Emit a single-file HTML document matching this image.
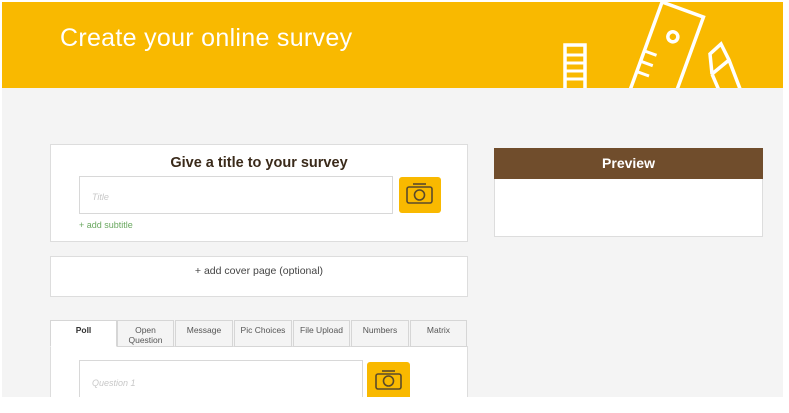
<!DOCTYPE html>
<html><head><meta charset="utf-8"><style>
*{margin:0;padding:0;box-sizing:border-box}
body{width:789px;height:413px;background:#fff;font-family:"Liberation Sans",sans-serif;position:relative;overflow:hidden}
.abs{position:absolute}
.gray{left:2px;top:2px;width:781px;height:395px;background:#f4f4f4}
.hdr{left:2px;top:2px;width:781px;height:86px;background:#f9b900;overflow:hidden}
.card{background:#fff;border:1px solid #ddd}
.inp{background:#fff;border:1px solid #d8d8d8;font-style:italic;color:#c8c8c8;font-size:9px}
.cam{background:#f9b900;border-radius:3px}
.tab{top:320px;height:27px;background:#f4f4f4;border:1px solid #d6d6d6;font-size:8.5px;color:#555;text-align:center;line-height:10px;padding-top:4px}
</style></head><body>
<div class="abs gray"></div>
<div class="abs hdr">
<div class="abs" style="left:58px;top:22px;color:#fff;font-size:25px;letter-spacing:0.3px">Create your online survey</div>
<svg class="abs" style="left:0;top:0" width="781" height="86" fill="none" stroke="#fff" stroke-width="3.5">
<rect x="563" y="43" width="20" height="48"/>
<path d="M563 53h20M563 61h20M563 69h20M563 77h20" stroke-width="3"/>
<g transform="rotate(20 660 50)"><rect x="643" y="3" width="44" height="105"/><circle cx="665" cy="32" r="5"/><path d="M643 55h13M643 66h13M643 77h13" stroke-width="3"/></g>
<path d="M710 72 L708 52 L719 42 L727 58 L740 92 M710 72 L727 58 M710 72 L722 100" stroke-width="3.5"/>
</svg>
</div>
<div class="abs card" style="left:50px;top:144px;width:418px;height:98px"></div>
<div class="abs" style="left:50px;top:155px;width:418px;text-align:center;font-size:14.5px;font-weight:bold;color:#3a2a1a">Give a title to your survey</div>
<div class="abs inp" style="left:79px;top:176px;width:314px;height:38px;padding:15px 12px">Title</div>
<div class="abs cam" style="left:399px;top:177px;width:42px;height:36px"></div>
<svg class="abs" style="left:399px;top:177px" width="42" height="36" fill="none" stroke="#5a4a2a" stroke-width="1.6"><rect x="8" y="10" width="25" height="16" rx="2"/><path d="M14 7h13"/><circle cx="20.5" cy="18" r="5"/></svg>
<div class="abs" style="left:79px;top:220px;font-size:9px;color:#6aa860">+ add subtitle</div>
<div class="abs card" style="left:50px;top:256px;width:418px;height:41px"></div>
<div class="abs" style="left:50px;top:265px;width:418px;text-align:center;font-size:10.5px;color:#444">+ add cover page (optional)</div>
<div class="abs card" style="left:494px;top:148px;width:269px;height:89px"></div>
<div class="abs" style="left:494px;top:148px;width:269px;height:31px;background:#704d2c;color:#fff;font-weight:bold;font-size:14px;text-align:center;line-height:31px">Preview</div>
<div class="abs card" style="left:50px;top:346px;width:418px;height:60px"></div>
<div class="abs tab" style="left:50px;width:67px;background:#fff;border-bottom-color:#fff;font-weight:bold;color:#333">Poll</div>
<div class="abs tab" style="left:117px;width:57px">Open<br>Question</div>
<div class="abs tab" style="left:175px;width:58px">Message</div>
<div class="abs tab" style="left:234px;width:58px">Pic Choices</div>
<div class="abs tab" style="left:293px;width:57px">File Upload</div>
<div class="abs tab" style="left:351px;width:58px">Numbers</div>
<div class="abs tab" style="left:410px;width:57px">Matrix</div>
<div class="abs inp" style="left:79px;top:360px;width:284px;height:40px;padding:17px 12px">Question 1</div>
<div class="abs cam" style="left:367px;top:362px;width:43px;height:40px"></div>
<svg class="abs" style="left:367px;top:362px" width="43" height="36" fill="none" stroke="#5a4a2a" stroke-width="1.6"><rect x="9" y="12" width="25" height="15" rx="2"/><path d="M15 9h13"/><circle cx="21.5" cy="19" r="5"/></svg>
<div class="abs" style="left:0;top:397px;width:789px;height:16px;background:#fff"></div>
</body></html>
